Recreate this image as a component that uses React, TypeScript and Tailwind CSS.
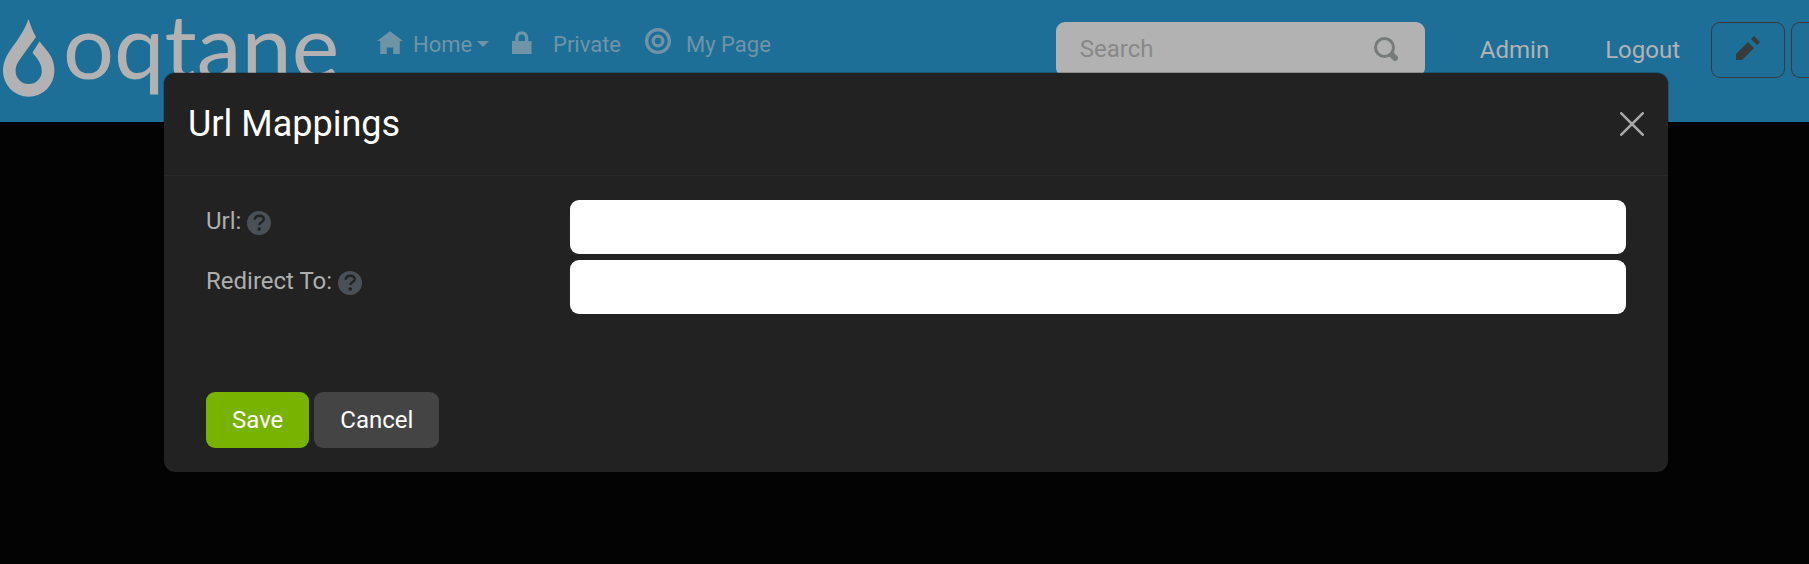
import React from "react";

type IconProps = { className?: string };

function Drop({ className }: IconProps) {
  return (
    <svg viewBox="0 0 52 78" className={className} fill="currentColor" aria-hidden="true">
      <path d="M25.500 0C22.500 9 16 19.500 8 30C3 37 0 44 0 52A25.700 25.700 0 0 0 51.400 52C51.400 44 49 38 45 33C41.500 28.500 38.500 25 36.500 22.500L29.500 33.500C33 38.500 38.800 43.500 38.800 52A13.100 13.100 0 0 1 12.600 52C12.600 45 16.500 41 20 36L33 18C30 13 27.500 6 25.500 0Z" />
    </svg>
  );
}

function HomeIcon({ className }: IconProps) {
  return (
    <svg viewBox="0 -1 8 8" className={className} fill="currentColor" aria-hidden="true">
      <path d="M4 0l-4 3h1v4h2v-2h2v2h2v-4.030l1 .030-4-3z" />
    </svg>
  );
}

function LockIcon({ className }: IconProps) {
  return (
    <svg viewBox="0 -1 8 8" className={className} fill="currentColor" aria-hidden="true">
      <path d="M3 0c-1.100 0-2 .9-2 2v1h-1v4h6v-4h-1v-1c0-1.100-.9-2-2-2zm0 1c.56 0 1 .44 1 1v1h-2v-1c0-.56.44-1 1-1z" />
    </svg>
  );
}

function TargetIcon({ className }: IconProps) {
  return (
    <svg viewBox="0 0 8 8" className={className} fill="none" stroke="currentColor" aria-hidden="true">
      <circle cx="4" cy="4" r="3.500" />
      <circle cx="4" cy="4" r="1.500" />
    </svg>
  );
}

function SearchIcon({ className }: IconProps) {
  return (
    <svg viewBox="0 0 8 8" className={className} fill="none" stroke="currentColor" aria-hidden="true">
      <circle cx="3.500" cy="3.500" r="3" />
      <path d="M6 6l1 1" strokeWidth="2" strokeLinecap="round" />
    </svg>
  );
}

function PencilIcon({ className }: IconProps) {
  return (
    <svg viewBox="0 0 8 8" className={className} fill="currentColor" aria-hidden="true">
      <path d="M6 0l-1 1 2 2 1-1-2-2zm-2 2l-4 4v2h2l4-4-2-2z" />
    </svg>
  );
}

function CloseIcon({ className }: IconProps) {
  return (
    <svg viewBox="0 0 24 24" className={className} fill="none" stroke="currentColor" aria-hidden="true">
      <path d="M1.300 1.300L22.700 22.700M22.700 1.300L1.300 22.700" strokeWidth="2.600" strokeLinecap="round" />
    </svg>
  );
}

function HelpIcon({ className }: IconProps) {
  return (
    <svg viewBox="0 0 24 24" className={className} aria-hidden="true">
      <circle cx="12" cy="12" r="12" fill="#495057" />
      <path
        d="M7.500 8.800C7.900 6.100 9.700 4.700 12.300 4.700C15 4.700 16.800 6 16.800 8.200C16.800 11.200 12.300 10.800 12.300 14"
        fill="none"
        stroke="#222222"
        strokeWidth="2.400"
      />
      <circle cx="12.200" cy="18" r="1.800" fill="#222222" />
    </svg>
  );
}

function Field({ id, label }: { id: string; label: string }) {
  return (
    <div className="grid grid-cols-[1fr_3fr]">
      <div className="flex items-start gap-1.5 px-[18px] pt-[3px]">
        <label htmlFor={id} className="leading-9 text-[#adafae]">
          {label}
        </label>
        <HelpIcon className="mt-2 size-6" />
      </div>
      <div className="px-[18px]">
        <input id={id} type="text" className="block h-[54px] w-full rounded-[9px] bg-white px-6 text-[#222222] outline-none" />
      </div>
    </div>
  );
}

export default function App() {
  return (
    <div className="relative min-h-screen overflow-hidden bg-[#030303] font-['Roboto',sans-serif] text-2xl">
      <header className="flex h-[122px] items-start bg-[#1e6f98] text-[#b2b2b2]">
        <a href="#" className="flex w-[377px] shrink-0 items-start pl-[3px]">
          <Drop className="mt-[19px] h-[78px] w-[52px] shrink-0" />
          <span className="ml-2 font-['Lato',sans-serif] text-[90px] leading-[88px]">oqtane</span>
        </a>
        <nav className="flex shrink-0 items-start pt-7 text-[22px] leading-[34px] text-[#7094a5]">
          <a href="#" className="flex w-[135px]">
            <HomeIcon className="mr-2.5 size-[26px]" />
            Home
            <svg viewBox="0 0 12 6" className="mt-[13px] ml-[5px] h-1.5 w-3" fill="currentColor" aria-hidden="true">
              <path d="M0 0h12L6 6z" />
            </svg>
          </a>
          <a href="#" className="flex w-[133px]">
            <LockIcon className="mr-[15px] size-[26px]" />
            Private
          </a>
          <a href="#" className="flex">
            <TargetIcon className="mr-[15px] size-[26px]" />
            My Page
          </a>
        </nav>
        <div className="ml-auto flex shrink-0 items-start pt-[22px] leading-9">
          <div className="flex h-[55px] w-[369px] items-center rounded-[9px] bg-[#b2b2b2] px-6 pb-0.5 text-[#888888]">
            <input
              type="search"
              aria-label="Search"
              placeholder="Search"
              className="min-w-0 flex-1 bg-transparent outline-none placeholder:text-[#888888]"
            />
            <button type="button" aria-label="Submit search" className="mr-[3px] text-[#777b7b]">
              <SearchIcon className="size-6" />
            </button>
          </div>
          <a href="#" className="ml-[31px] px-6 py-2.5">Admin</a>
          <a href="#" className="ml-2 px-6 py-2.5">Logout</a>
          <button
            type="button"
            aria-label="Edit page"
            className="ml-[7px] flex h-14 w-[74px] items-center justify-center rounded-[9px] border border-[#3a3a3a] pb-1 text-[#3a3a3a]"
          >
            <PencilIcon className="size-6" />
          </button>
          <button
            type="button"
            aria-label="Settings"
            className="ml-1.5 h-14 w-[18px] rounded-l-[9px] border border-r-0 border-[#3a3a3a]"
          />
        </div>
      </header>

      <div className="absolute inset-0 pt-[72px] pr-[140px] pl-[163px]">
        <section
          role="dialog"
          aria-labelledby="dialog-title"
          className="rounded-[12px] border border-black/20 bg-[#222222] bg-clip-padding"
        >
          <div className="flex items-center justify-between border-b border-[#292929] px-6 pt-6 pb-6">
            <h1 id="dialog-title" className="text-4xl leading-[54px] text-white">
              Url Mappings
            </h1>
            <button type="button" aria-label="Close" className="text-[#a9a9a9]">
              <CloseIcon className="size-6" />
            </button>
          </div>
          <form className="p-6" onSubmit={(e) => e.preventDefault()}>
            <div className="flex flex-col gap-1.5">
              <Field id="url" label="Url:" />
              <Field id="redirect" label="Redirect To:" />
            </div>
            <div className="mt-[78px] flex gap-[5px] px-[18px] leading-9 text-white">
              <button type="submit" className="h-14 rounded-[9px] bg-[#77b300] px-[26px]">
                Save
              </button>
              <button type="button" className="h-14 rounded-[9px] bg-[#444444] px-[26px]">
                Cancel
              </button>
            </div>
          </form>
        </section>
      </div>
    </div>
  );
}
